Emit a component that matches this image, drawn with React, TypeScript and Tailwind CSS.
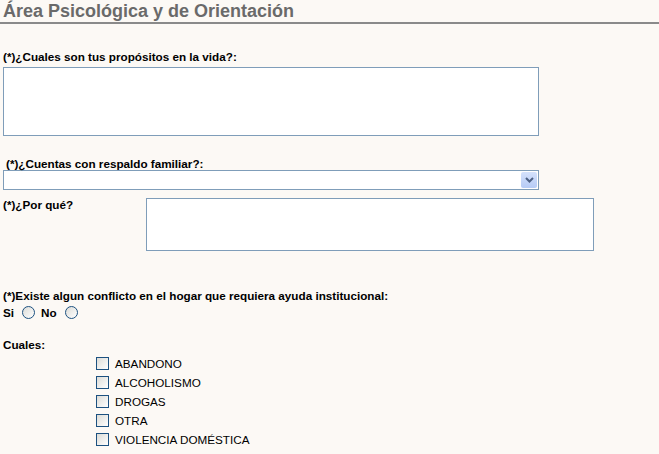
import React from "react";

function Radio() {
  return (
    <span className="inline-block w-[13px] h-[13px] rounded-full border border-[#1c5180] bg-gradient-to-br from-[#dcdcd7] to-white" />
  );
}

function Check({ label }: { label: string }) {
  return (
    <div className="flex items-center h-[19px]">
      <span className="inline-block w-[13px] h-[13px] border border-[#1c5180] bg-gradient-to-br from-[#dcdcd7] to-white" />
      <span className="ml-[6px] text-[11.7px] text-black leading-[13px]">{label}</span>
    </div>
  );
}

export default function App() {
  return (
    <div
      className="w-[659px] h-[454px] bg-[#fcf9f5] text-black overflow-hidden"
      style={{ fontFamily: '"Liberation Sans", Arial, sans-serif' }}
    >
      <div className="h-[24px] border-b-2 border-[#8a8a8a] pl-[3px]">
        <span className="text-[18px] font-bold text-[#6a6a6a] leading-[21px]">
          Área Psicológica y de Orientación
        </span>
      </div>

      <div className="pl-[3px] mt-[26px] text-[11.7px] font-bold leading-[14px]">
        (*)¿Cuales son tus propósitos en la vida?:
      </div>
      <div className="pl-[3px] mt-[3px]">
        <div className="w-[536px] h-[69px] border border-[#7f9db9] bg-white" />
      </div>

      <div className="pl-[6px] mt-[21px] text-[11.7px] font-bold leading-[14px]">
        (*)¿Cuentas con respaldo familiar?:
      </div>
      <div className="pl-[3px] mt-[-1px]">
        <div className="w-[536px] h-[20px] border border-[#7f9db9] bg-white flex items-center justify-end pr-[1px]">
          <div className="w-[16px] h-[16px] rounded-[2px] bg-gradient-to-b from-[#d4e1fb] to-[#b6cbf6] flex items-center justify-center">
            <svg width="9" height="6" viewBox="0 0 9 6">
              <path d="M1 1 L4.5 4.5 L8 1" stroke="#4d6185" strokeWidth="2" fill="none" />
            </svg>
          </div>
        </div>
      </div>

      <div className="flex mt-[8px]">
        <div className="w-[146px] pl-[3px] text-[11.7px] font-bold leading-[14px]">(*)¿Por qué?</div>
        <div className="w-[448px] h-[53px] border border-[#7f9db9] bg-white" />
      </div>

      <div className="pl-[3px] mt-[38px] text-[11.7px] font-bold leading-[14px]">
        (*)Existe algun conflicto en el hogar que requiera ayuda institucional:
      </div>
      <div className="pl-[3px] mt-[2px] flex items-center h-[15px] text-[11.7px] font-bold">
        <span>Si</span>
        <span className="ml-[8px] flex"><Radio /></span>
        <span className="ml-[6px]">No</span>
        <span className="ml-[8px] flex"><Radio /></span>
      </div>

      <div className="pl-[3px] mt-[18px] text-[11.7px] font-bold leading-[14px]">Cuales:</div>
      <div className="pl-[96px] mt-[2px] flex flex-col">
        <Check label="ABANDONO" />
        <Check label="ALCOHOLISMO" />
        <Check label="DROGAS" />
        <Check label="OTRA" />
        <Check label="VIOLENCIA DOMÉSTICA" />
      </div>
    </div>
  );
}
